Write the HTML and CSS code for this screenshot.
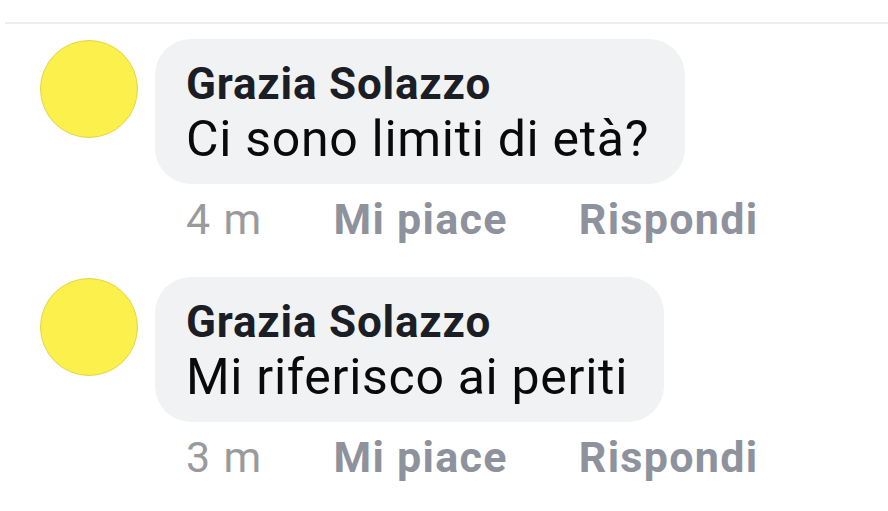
FILE: index.html
```html
<!DOCTYPE html>
<html lang="it">
<head>
<meta charset="utf-8">
<link rel="stylesheet" href="styles.css">
</head>
<body>
<div class="page">
  <div class="divider"></div>
  <div class="comment">
    <div class="avatar"></div>
    <div class="body">
      <div class="bubble">
        <div class="name">Grazia Solazzo</div>
        <div class="text">Ci sono limiti di età?</div>
      </div>
      <div class="actions">
        <span class="time">4 m</span>
        <span class="action">Mi piace</span>
        <span class="action">Rispondi</span>
      </div>
    </div>
  </div>
  <div class="comment">
    <div class="avatar"></div>
    <div class="body">
      <div class="bubble">
        <div class="name">Grazia Solazzo</div>
        <div class="text">Mi riferisco ai periti</div>
      </div>
      <div class="actions">
        <span class="time">3 m</span>
        <span class="action">Mi piace</span>
        <span class="action">Rispondi</span>
      </div>
    </div>
  </div>
</div>
</body>
</html>
```
FILE: styles.css
```css
html, body {
  margin: 0;
  padding: 0;
  background: #ffffff;
}
.page {
  font-family: Roboto, "Liberation Sans", sans-serif;
  padding-top: 22px;
}
.divider {
  height: 2px;
  background: #eceef0;
  margin-left: 5px;
  margin-bottom: 15px;
}
.comment {
  display: flex;
  align-items: flex-start;
  padding-left: 40px;
  margin-bottom: 33px;
}
.avatar {
  width: 96px;
  height: 96px;
  border-radius: 50%;
  background: #fbf04c;
  border: 1px solid #e2d64a;
  flex: none;
  margin-top: 1px;
}
.body {
  margin-left: 17px;
  display: flex;
  flex-direction: column;
  align-items: flex-start;
}
.bubble {
  background: #f1f2f4;
  border-radius: 36px;
  padding: 20px 36px 15px 31px;
}
.name {
  font-size: 44px;
  line-height: 50px;
  font-weight: 700;
  letter-spacing: 0.8px;
  color: #1c1e26;
}
.text {
  font-size: 50px;
  line-height: 60px;
  letter-spacing: 0.7px;
  color: #0a0a0a;
}
.actions {
  display: flex;
  gap: 71px;
  margin-top: 10px;
  padding-left: 31px;
  font-size: 43px;
  line-height: 50px;
  letter-spacing: 1.3px;
}
.time {
  color: #9a9a9c;
}
.action {
  color: #8d929c;
  font-weight: 700;
}
```
